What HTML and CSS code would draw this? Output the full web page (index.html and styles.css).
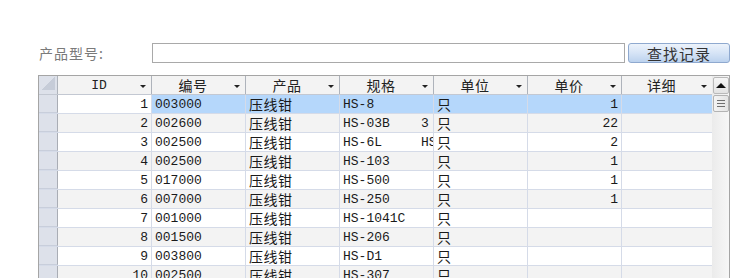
FILE: index.html
```html
<!DOCTYPE html>
<html lang="zh-CN">
<head>
    <meta charset="UTF-8">
    <title>产品查询</title>
    <link rel="stylesheet" href="styles.css">
</head>
<body>
    <div class="search">
        <label class="search-label" for="model">产品型号:</label>
        <input type="text" id="model" class="search-input">
        <button type="button" class="search-btn">查找记录</button>
    </div>

    <div class="grid">
        <div class="grid-body">
            <div class="row head">
                <div class="cell sel corner"><span class="tri"></span></div>
                <div class="cell hd"><span class="hd-text mono">ID</span><i class="arrow"></i></div>
                <div class="cell hd"><span class="hd-text">编号</span><i class="arrow"></i></div>
                <div class="cell hd"><span class="hd-text">产品</span><i class="arrow"></i></div>
                <div class="cell hd"><span class="hd-text">规格</span><i class="arrow"></i></div>
                <div class="cell hd"><span class="hd-text">单位</span><i class="arrow"></i></div>
                <div class="cell hd"><span class="hd-text">单价</span><i class="arrow"></i></div>
                <div class="cell hd"><span class="hd-text">详细</span><i class="arrow"></i></div>
            </div>

            <div class="row current">
                <div class="cell sel"></div>
                <div class="cell num focus">1</div>
                <div class="cell">003000</div>
                <div class="cell zh">压线钳</div>
                <div class="cell">HS-8</div>
                <div class="cell zh">只</div>
                <div class="cell num">1</div>
                <div class="cell"></div>
            </div>
            <div class="row">
                <div class="cell sel"></div>
                <div class="cell num">2</div>
                <div class="cell">002600</div>
                <div class="cell zh">压线钳</div>
                <div class="cell">HS-03B    3</div>
                <div class="cell zh">只</div>
                <div class="cell num">22</div>
                <div class="cell"></div>
            </div>
            <div class="row">
                <div class="cell sel"></div>
                <div class="cell num">3</div>
                <div class="cell">002500</div>
                <div class="cell zh">压线钳</div>
                <div class="cell">HS-6L     HS-6L</div>
                <div class="cell zh">只</div>
                <div class="cell num">2</div>
                <div class="cell"></div>
            </div>
            <div class="row">
                <div class="cell sel"></div>
                <div class="cell num">4</div>
                <div class="cell">002500</div>
                <div class="cell zh">压线钳</div>
                <div class="cell">HS-103</div>
                <div class="cell zh">只</div>
                <div class="cell num">1</div>
                <div class="cell"></div>
            </div>
            <div class="row">
                <div class="cell sel"></div>
                <div class="cell num">5</div>
                <div class="cell">017000</div>
                <div class="cell zh">压线钳</div>
                <div class="cell">HS-500</div>
                <div class="cell zh">只</div>
                <div class="cell num">1</div>
                <div class="cell"></div>
            </div>
            <div class="row">
                <div class="cell sel"></div>
                <div class="cell num">6</div>
                <div class="cell">007000</div>
                <div class="cell zh">压线钳</div>
                <div class="cell">HS-250</div>
                <div class="cell zh">只</div>
                <div class="cell num">1</div>
                <div class="cell"></div>
            </div>
            <div class="row">
                <div class="cell sel"></div>
                <div class="cell num">7</div>
                <div class="cell">001000</div>
                <div class="cell zh">压线钳</div>
                <div class="cell">HS-1041C</div>
                <div class="cell zh">只</div>
                <div class="cell num"></div>
                <div class="cell"></div>
            </div>
            <div class="row">
                <div class="cell sel"></div>
                <div class="cell num">8</div>
                <div class="cell">001500</div>
                <div class="cell zh">压线钳</div>
                <div class="cell">HS-206</div>
                <div class="cell zh">只</div>
                <div class="cell num"></div>
                <div class="cell"></div>
            </div>
            <div class="row">
                <div class="cell sel"></div>
                <div class="cell num">9</div>
                <div class="cell">003800</div>
                <div class="cell zh">压线钳</div>
                <div class="cell">HS-D1</div>
                <div class="cell zh">只</div>
                <div class="cell num"></div>
                <div class="cell"></div>
            </div>
            <div class="row">
                <div class="cell sel"></div>
                <div class="cell num">10</div>
                <div class="cell">002500</div>
                <div class="cell zh">压线钳</div>
                <div class="cell">HS-307</div>
                <div class="cell zh">只</div>
                <div class="cell num"></div>
                <div class="cell"></div>
            </div>
            <div class="row">
                <div class="cell sel"></div>
                <div class="cell num">11</div>
                <div class="cell">002500</div>
                <div class="cell zh">压线钳</div>
                <div class="cell">HS-308</div>
                <div class="cell zh">只</div>
                <div class="cell num"></div>
                <div class="cell"></div>
            </div>
        </div>

        <!-- scroll bar -->
        <div class="vscroll">
            <div class="vscroll-btn"><i class="up"></i></div>
            <div class="vscroll-thumb"><i></i><i></i><i></i></div>
        </div>
    </div>
</body>
</html>
```

FILE: styles.css
```css
* {
    margin: 0;
    padding: 0;
    box-sizing: border-box;
}

body {
    background: #fff;
    color: #1a1a1a;
    font-family: "Liberation Mono", "Noto Sans CJK SC", monospace;
    font-size: 13px;
    height: 278px;
    overflow: hidden;
}

/* Barra de busca */
.search {
    display: flex;
    align-items: center;
    padding: 43px 0 0 39px;
    height: 63px;
}

.search-label {
    width: 113px;
    color: #7a7a7a;
    font-family: "Noto Sans CJK SC", sans-serif;
    font-size: 14px;
    line-height: 20px;
    letter-spacing: 1px;
}

.search-input {
    width: 473px;
    height: 20px;
    border: 1px solid #a9a9a9;
    background: #fff;
}

.search-btn {
    width: 102px;
    height: 20px;
    margin-left: 3px;
    border: 1px solid #8fa9cf;
    border-radius: 3px;
    background: linear-gradient(to bottom, #edf3fb, #d6e4f6 50%, #bcd2ee);
    color: #333;
    font-family: "Noto Sans CJK SC", sans-serif;
    font-size: 15px;
    line-height: 17px;
    letter-spacing: 1px;
}

/* Grade de dados */
.grid {
    display: flex;
    width: 692px;
    margin: 12px 0 0 38px;
    border: 1px solid #a5a5a5;
    border-bottom: none;
}

.grid-body {
    width: 674px;
}

.row {
    display: grid;
    grid-template-columns: 19px 94px 94px 94px 94px 94px 94px 90px;
    height: 19px;
    border-bottom: 1px solid #d5dbe8;
}

.row:nth-child(odd) {
    background: #f3f3f3;
}

.cell {
    border-right: 1px solid #d5dbe8;
    padding: 0 2px 0 3px;
    line-height: 19px;
    white-space: pre;
    overflow: hidden;
}

.cell:last-child {
    border-right: none;
}

.num {
    text-align: right;
    padding-right: 3px;
}

.zh {
    font-family: "Noto Sans CJK SC", sans-serif;
    font-size: 14px;
    letter-spacing: 0.5px;
    line-height: 18px;
}

.sel {
    background: #dde1ea;
    border-right: 1px solid #a9adb5;
    border-bottom: 1px solid #c8cedb;
    padding: 0;
}

.current .cell {
    background: #b5d7fb;
}

.current .sel {
    background: #dde1ea;
}

.current .focus {
    background: #fff;
}

/* Cabeçalho */
.head {
    background: #dfe3ea;
    border-bottom: 1px solid #c3c8d2;
    height: 19px;
}

.head .cell {
    border-right-color: #aeb3bb;
}

.head .sel {
    border-bottom: none;
}

.corner {
    display: flex;
    align-items: flex-end;
    justify-content: flex-end;
    padding: 0 2px 4px 0;
}

.tri {
    width: 13px;
    height: 13px;
    background: linear-gradient(to top left, #c6ccd8 50%, transparent 51%);
}

.hd {
    display: flex;
    align-items: center;
    padding: 0 5px 0 0;
}

.hd-text {
    flex: 1;
    text-align: center;
    font-family: "Noto Sans CJK SC", sans-serif;
    font-size: 14px;
    letter-spacing: 0.5px;
    color: #222;
}

.hd-text.mono {
    font-family: "Liberation Mono", monospace;
    font-size: 13px;
    letter-spacing: 0;
}

.arrow {
    width: 0;
    height: 0;
    border-left: 3px solid transparent;
    border-right: 3px solid transparent;
    border-top: 3px solid #222;
    margin-top: 2px;
}

/* Barra de rolagem */
.vscroll {
    width: 17px;
    background: linear-gradient(to right, #ebebeb, #f7f7f7);
    padding: 1px 0 0 1px;
}

.vscroll-btn {
    height: 17px;
    border: 1px solid #b9b9b9;
    border-radius: 2px;
    background: linear-gradient(to bottom, #f6f6f6, #e3e3e3);
    display: flex;
    align-items: center;
    justify-content: center;
}

.up {
    width: 0;
    height: 0;
    border-left: 5px solid transparent;
    border-right: 5px solid transparent;
    border-bottom: 5px solid #111;
}

.vscroll-thumb {
    height: 17px;
    margin-top: 1px;
    border: 1px solid #b3b3b3;
    border-radius: 2px;
    background: linear-gradient(to right, #f4f4f4, #e4e4e4);
    display: flex;
    flex-direction: column;
    justify-content: center;
    gap: 2px;
    padding: 0 3px;
}

.vscroll-thumb i {
    height: 1px;
    background: #6f6f6f;
}
```
